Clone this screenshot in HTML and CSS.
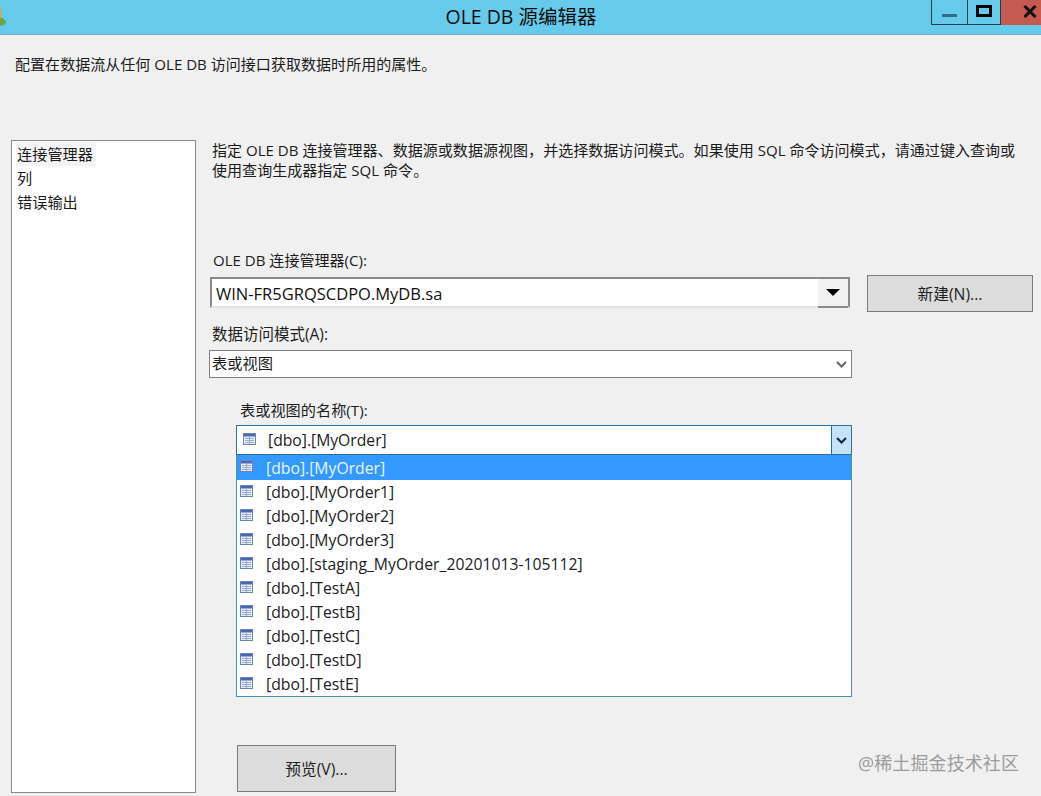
FILE: index.html
```html
<!DOCTYPE html>
<html lang="zh-CN">
<head>
<meta charset="utf-8">
<title>OLE DB 源编辑器</title>
<link rel="stylesheet" href="styles.css">
</head>
<body>
<div class="window">
  <header class="titlebar">
    <svg class="app-icon" width="7" height="22" viewBox="0 0 7 22"><path d="M0 4h1.5l.5 10H0z" fill="#b9b46a"/><path d="M0 14h3l3 3.5-1 3-3 1H0z" fill="#6ba544"/></svg>
    <h1 class="title">OLE DB 源编辑器</h1>
    <div class="win-buttons">
      <div class="win-btn win-min"><span class="min-glyph"></span></div>
      <div class="win-btn win-max"><span class="max-glyph"></span></div>
      <div class="win-btn win-close"><svg width="14" height="13" viewBox="0 0 14 13"><path d="M1.5 1l11 11M12.5 1l-11 11" stroke="#111" stroke-width="3" fill="none"/></svg></div>
    </div>
  </header>
  <p class="intro">配置在数据流从任何 OLE DB 访问接口获取数据时所用的属性。</p>
  <div class="main">
    <nav class="sidebar">
      <div class="nav-item nav-active">连接管理器</div>
      <div class="nav-item">列</div>
      <div class="nav-item">错误输出</div>
    </nav>
    <section class="content">
      <p class="desc">指定 OLE DB 连接管理器、数据源或数据源视图，并选择数据访问模式。如果使用 SQL 命令访问模式，请通过键入查询或<br>使用查询生成器指定 SQL 命令。</p>
      <label class="label label-conn">OLE DB 连接管理器(C):</label>
      <div class="conn-row">
        <div class="combo-classic">
          <span class="combo-value">WIN-FR5GRQSCDPO.MyDB.sa</span>
          <span class="classic-arrow"><svg width="16" height="9" viewBox="0 0 16 9"><path d="M1 1h14L8 8z" fill="#000"/></svg></span>
        </div>
        <button class="btn btn-new">新建(N)...</button>
      </div>
      <label class="label label-mode">数据访问模式(A):</label>
      <div class="select-flat">
        <span class="select-value">表或视图</span>
        <svg width="11" height="7" viewBox="0 0 11 7"><path d="M1 1l4.5 4.5L10 1" stroke="#666" stroke-width="2" fill="none"/></svg>
      </div>
      <div class="table-block">
        <label class="label label-table">表或视图的名称(T):</label>
        <div class="combo-open">
          <svg class="tbl-icon combo-icon" width="13" height="12" viewBox="0 0 13 12"><use href="#tbl"/></svg>
          <span class="open-value">[dbo].[MyOrder]</span>
          <span class="open-arrow"><svg width="11" height="7" viewBox="0 0 11 7"><path d="M1 1l4.5 4.5L10 1" stroke="#10233a" stroke-width="2" fill="none"/></svg></span>
        </div>
        <ul class="list">
          <li class="row row-selected"><svg class="tbl-icon" width="13" height="12" viewBox="0 0 13 12"><use href="#tbl"/></svg>[dbo].[MyOrder]</li>
          <li class="row"><svg class="tbl-icon" width="13" height="12" viewBox="0 0 13 12"><use href="#tbl"/></svg>[dbo].[MyOrder1]</li>
          <li class="row"><svg class="tbl-icon" width="13" height="12" viewBox="0 0 13 12"><use href="#tbl"/></svg>[dbo].[MyOrder2]</li>
          <li class="row"><svg class="tbl-icon" width="13" height="12" viewBox="0 0 13 12"><use href="#tbl"/></svg>[dbo].[MyOrder3]</li>
          <li class="row"><svg class="tbl-icon" width="13" height="12" viewBox="0 0 13 12"><use href="#tbl"/></svg>[dbo].[staging_MyOrder_20201013-105112]</li>
          <li class="row"><svg class="tbl-icon" width="13" height="12" viewBox="0 0 13 12"><use href="#tbl"/></svg>[dbo].[TestA]</li>
          <li class="row"><svg class="tbl-icon" width="13" height="12" viewBox="0 0 13 12"><use href="#tbl"/></svg>[dbo].[TestB]</li>
          <li class="row"><svg class="tbl-icon" width="13" height="12" viewBox="0 0 13 12"><use href="#tbl"/></svg>[dbo].[TestC]</li>
          <li class="row"><svg class="tbl-icon" width="13" height="12" viewBox="0 0 13 12"><use href="#tbl"/></svg>[dbo].[TestD]</li>
          <li class="row"><svg class="tbl-icon" width="13" height="12" viewBox="0 0 13 12"><use href="#tbl"/></svg>[dbo].[TestE]</li>
        </ul>
        <button class="btn btn-preview">预览(V)...</button>
      </div>
    </section>
  </div>
  <div class="watermark">@稀土掘金技术社区</div>
</div>
<svg class="defs" width="0" height="0">
  <defs>
    <g id="tbl">
      <rect x="0.5" y="0.5" width="12" height="11" fill="#e8eef8" stroke="#6f82b8"/>
      <rect x="1" y="1" width="11" height="2.5" fill="#4a68b4"/>
      <path d="M2 5.5h9M2 7.5h9M2 9.5h9M6.5 4v7" stroke="#9cabd0" stroke-width="1" fill="none"/>
    </g>
  </defs>
</svg>
</body>
</html>
```
FILE: styles.css
```css
* { box-sizing: border-box; }
html, body { margin: 0; height: 100%; overflow: hidden; }
body {
  background: #f0f0f0;
  color: #1c1c1c;
  font-family: "Open Sans", "Noto Sans CJK SC", sans-serif;
  font-size: 15.05px;
}
.window { position: relative; height: 796px; }
.titlebar {
  position: relative;
  height: 35px;
  background: #66cbea;
  border-bottom: 1px solid #7fa9c8;
  display: flex;
  justify-content: center;
  align-items: center;
}
.app-icon { position: absolute; left: 0; top: 4px; }
.title {
  margin: 0 0 0 1px;
  font-size: 19.5px;
  font-weight: 400;
  color: #0c0c0c;
  line-height: 34px;
}
.win-buttons { position: absolute; top: 0; right: 0; display: flex; height: 25px; }
.win-btn { height: 25px; display: flex; align-items: center; justify-content: center; }
.win-min { width: 36px; border: 1px solid #1d3f55; border-top: 0; border-right: 0; }
.win-max { width: 34px; border: 1px solid #1d3f55; border-top: 0; }
.win-close { width: 40px; background: #c55a50; padding-left: 17px; padding-bottom: 2px; }
.min-glyph { width: 15px; height: 3px; background: #2c6f8c; margin-top: 7px; }
.max-glyph { width: 16px; height: 12px; border: 3px solid #050505; margin-bottom: 3px; margin-right: 1px; }
.intro { margin: 0; padding: 19px 0 0 15px; height: 105px; line-height: 20px; }
.main {
  display: grid;
  grid-template-columns: 185px 1fr;
  column-gap: 13px;
  padding-left: 11px;
}
.sidebar {
  height: 653px;
  background: #fff;
  border: 1px solid #8c8c8c;
  padding: 1px 4px;
  font-size: 15.2px;
}
.nav-item { height: 24px; line-height: 24px; padding-left: 1px; }
.nav-active { background: #f4f4f4; width: 80px; }
.content { padding-right: 8px; }
.desc { margin: 0; padding-left: 3px; line-height: 20px; height: 110px; white-space: nowrap; }
.label { display: block; line-height: 20px; }
.label-conn { padding-left: 4px; height: 27px; }
.conn-row { display: flex; align-items: flex-start; margin-left: 1px; }
.combo-classic {
  width: 640px;
  height: 31px;
  background: #fff;
  border: 2px solid #8a8a8a;
  border-bottom-color: #e4e4e4;
  display: flex;
  justify-content: space-between;
}
.combo-value { padding-left: 4px; line-height: 30px; color: #111; font-size: 16.5px; }
.classic-arrow {
  width: 30px;
  height: 29px;
  background: #f1f1f1;
  border-bottom: 2px solid #8a8a8a;
  display: flex;
  align-items: center;
  justify-content: center;
}
.btn {
  font: inherit;
  font-size: 15.7px;
  color: #1c1c1c;
  background: #dcdcdc;
  border: 1px solid #7a7a7a;
  border-radius: 0;
  padding: 0;
}
.btn-new { width: 166px; height: 37px; margin-left: 17px; margin-top: -2px; }
.label-mode { padding-left: 3px; height: 16px; margin-top: 12px; font-size: 15.5px; }
.select-flat {
  width: 643px;
  height: 28px;
  margin-top: 10px;
  background: #fff;
  border: 1px solid #7f7f7f;
  display: flex;
  align-items: center;
  justify-content: space-between;
  padding: 0 4px 0 2px;
  font-size: 15.25px;
}
.select-value { line-height: 24px; height: 26px; }
.table-block { margin-left: 27px; padding-top: 22px; width: 616px; }
.label-table { padding-left: 4px; height: 25px; font-size: 15.2px; }
.combo-open {
  height: 30px;
  background: #fff;
  border: 1px solid #2d6f95;
  display: flex;
  align-items: center;
  position: relative;
  font-size: 15.7px;
}
.combo-icon { margin-left: 6px; margin-right: 12px; margin-top: -3px; }
.open-value { flex: 1; }
.open-arrow {
  width: 20px;
  height: 28px;
  background: #c5e3f6;
  border-left: 1px solid #2d6f95;
  display: flex;
  align-items: center;
  justify-content: center;
}
.list {
  list-style: none;
  margin: 0;
  padding: 0;
  height: 242px;
  background: #fff;
  border: 1px solid #3f93ad;
  border-top: 0;
  font-size: 15.75px;
}
.row { height: 24px; line-height: 24px; display: flex; align-items: center; padding-left: 3px; color: #222; }
.row .tbl-icon { margin-right: 13px; margin-top: -3px; flex: none; }
.row-selected { background: #3399ff; color: #eaf4ff; height: 25px; }
.btn-preview { display: block; width: 159px; height: 47px; margin: 48px 0 0 1px; }
.watermark {
  position: absolute;
  left: 858px;
  top: 751px;
  font-size: 18px;
  line-height: 24px;
  color: #9b9b9b;
  letter-spacing: 0.1px;
}
.defs { position: absolute; }
```
